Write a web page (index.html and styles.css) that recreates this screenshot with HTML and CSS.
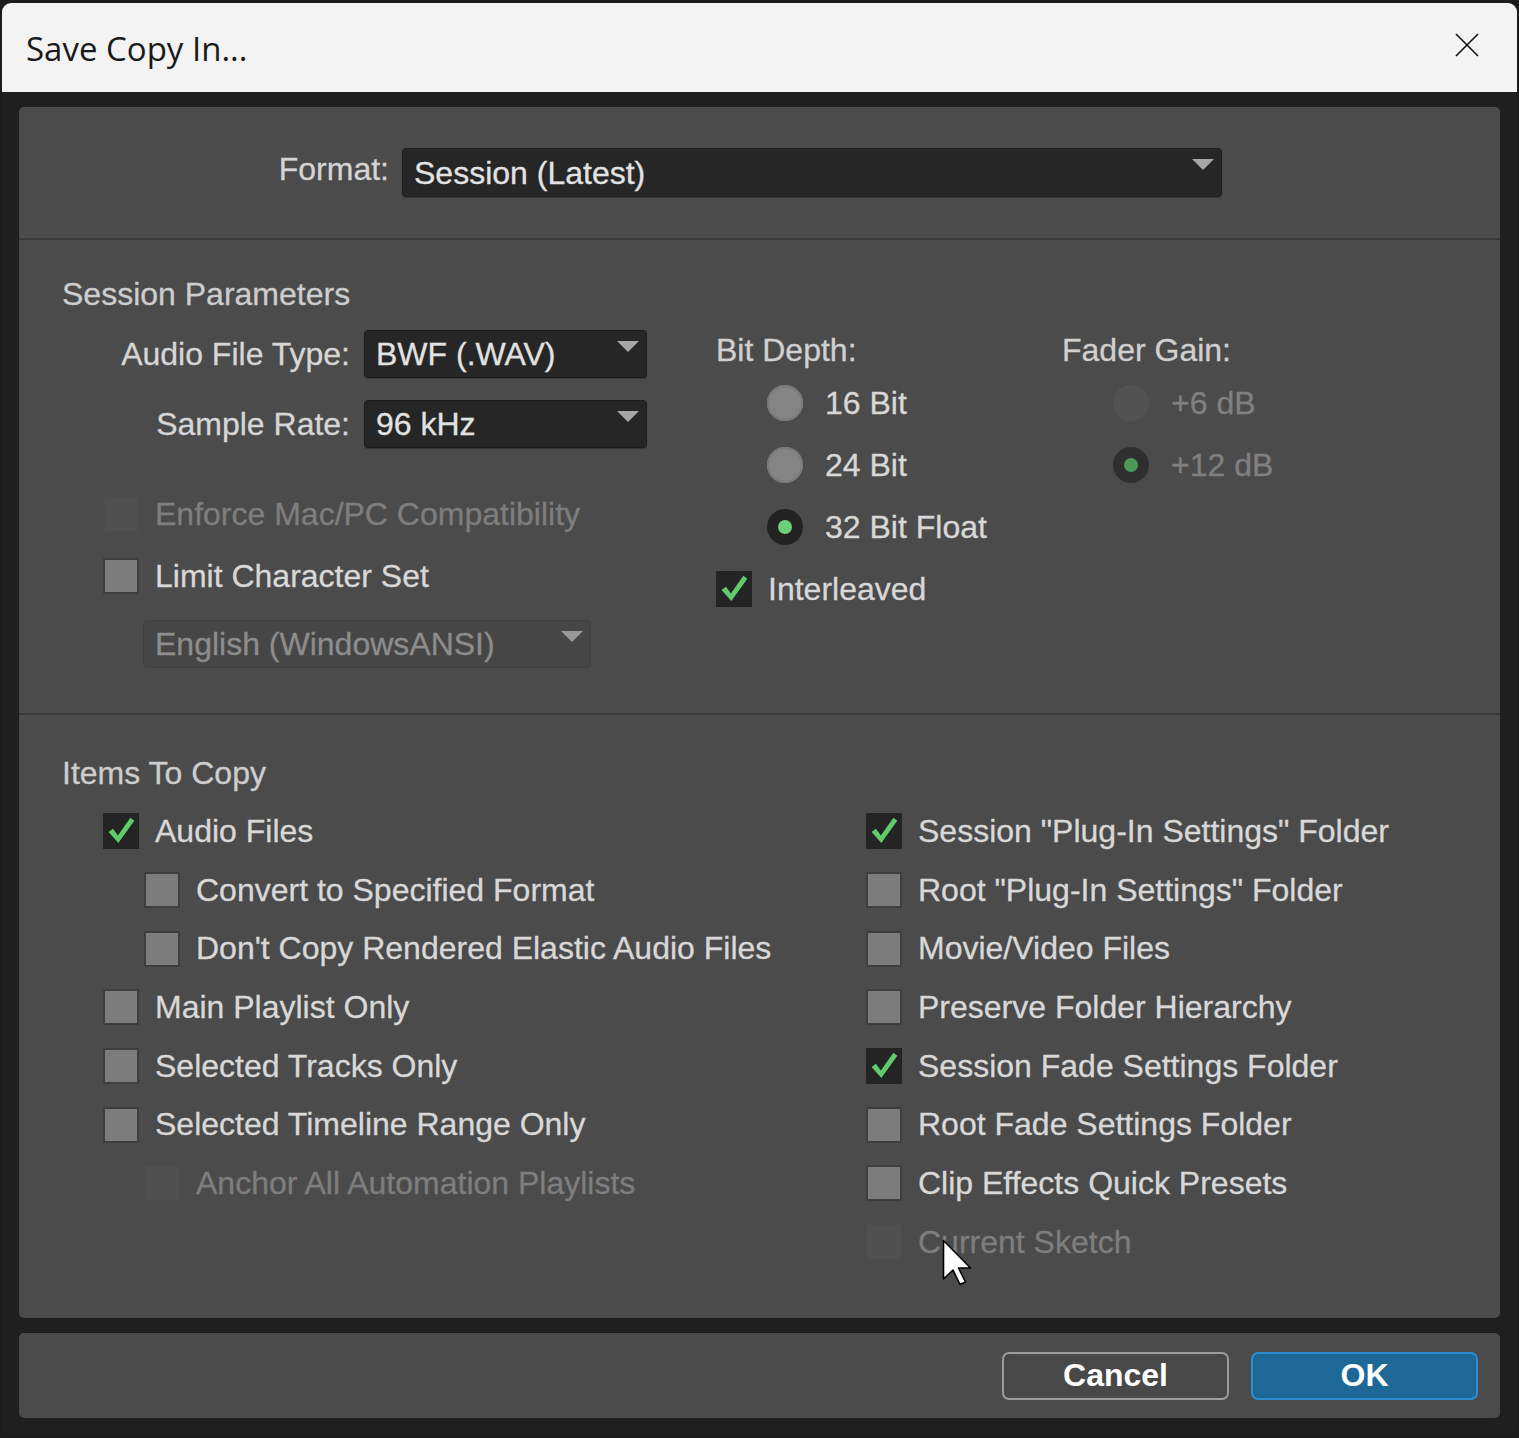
FILE: index.html
```html
<!DOCTYPE html>
<html lang="en">
<head>
<meta charset="UTF-8">
<title>Save Copy In...</title>
<link rel="stylesheet" href="styles.css">
</head>
<body>

<div class="dialog">
    <div class="titlebar">
        <span class="title">Save Copy In...</span>
        <svg class="close" width="24" height="24" viewBox="0 0 24 24">
            <path d="M1 1 L23 23 M23 1 L1 23" stroke="#111" stroke-width="1.6" fill="none"/>
        </svg>
    </div>

    <div class="frame">
        <div class="panel main">

            <div class="section format-row">
                <span class="format-label">Format:</span>
                <div class="select select-format">Session (Latest)<i class="arrow"></i></div>
            </div>

            <div class="section params">
                <div class="heading">Session Parameters</div>
                <div class="param-cols">
                    <div class="col col-a">
                        <div class="field">
                            <span class="field-label">Audio File Type:</span>
                            <div class="select select-small">BWF (.WAV)<i class="arrow"></i></div>
                        </div>
                        <div class="field field-gap">
                            <span class="field-label">Sample Rate:</span>
                            <div class="select select-small">96 kHz<i class="arrow"></i></div>
                        </div>
                        <div class="checks">
                            <div class="check check-param disabled"><span class="box"></span>Enforce Mac/PC Compatibility</div>
                            <div class="check check-param"><span class="box"></span>Limit Character Set</div>
                        </div>
                        <div class="select select-lang disabled">English (WindowsANSI)<i class="arrow"></i></div>
                    </div>

                    <div class="col col-b">
                        <div class="subhead">Bit Depth:</div>
                        <div class="radio"><span class="dot"></span>16 Bit</div>
                        <div class="radio"><span class="dot"></span>24 Bit</div>
                        <div class="radio on"><span class="dot"></span>32 Bit Float</div>
                        <div class="check check-param">
                            <span class="box checked"><svg viewBox="0 0 36 36"><path d="M4 19 L9 15.5 L14.5 23 L28.5 3 L33 6.5 L15 31.5 Z"/></svg></span>Interleaved
                        </div>
                    </div>

                    <div class="col col-c">
                        <div class="subhead">Fader Gain:</div>
                        <div class="radio disabled"><span class="dot"></span>+6 dB</div>
                        <div class="radio on disabled"><span class="dot"></span>+12 dB</div>
                    </div>
                </div>
            </div>

            <div class="section items">
                <div class="heading">Items To Copy</div>
                <div class="item-cols">
                    <div class="item-col item-left">
                        <div class="check"><span class="box checked"><svg viewBox="0 0 36 36"><path d="M4 19 L9 15.5 L14.5 23 L28.5 3 L33 6.5 L15 31.5 Z"/></svg></span>Audio Files</div>
                        <div class="check indent"><span class="box"></span>Convert to Specified Format</div>
                        <div class="check indent"><span class="box"></span>Don't Copy Rendered Elastic Audio Files</div>
                        <div class="check"><span class="box"></span>Main Playlist Only</div>
                        <div class="check"><span class="box"></span>Selected Tracks Only</div>
                        <div class="check"><span class="box"></span>Selected Timeline Range Only</div>
                        <div class="check indent disabled"><span class="box"></span>Anchor All Automation Playlists</div>
                    </div>
                    <div class="item-col">
                        <div class="check"><span class="box checked"><svg viewBox="0 0 36 36"><path d="M4 19 L9 15.5 L14.5 23 L28.5 3 L33 6.5 L15 31.5 Z"/></svg></span>Session "Plug-In Settings" Folder</div>
                        <div class="check"><span class="box"></span>Root "Plug-In Settings" Folder</div>
                        <div class="check"><span class="box"></span>Movie/Video Files</div>
                        <div class="check"><span class="box"></span>Preserve Folder Hierarchy</div>
                        <div class="check"><span class="box checked"><svg viewBox="0 0 36 36"><path d="M4 19 L9 15.5 L14.5 23 L28.5 3 L33 6.5 L15 31.5 Z"/></svg></span>Session Fade Settings Folder</div>
                        <div class="check"><span class="box"></span>Root Fade Settings Folder</div>
                        <div class="check"><span class="box"></span>Clip Effects Quick Presets</div>
                        <div class="check disabled"><span class="box"></span>Current Sketch</div>
                    </div>
                </div>
            </div>

        </div>

        <div class="panel buttons">
            <button class="btn">Cancel</button>
            <button class="btn btn-ok">OK</button>
        </div>
    </div>
</div>

<!-- mouse pointer over the dialog -->
<svg class="pointer" width="32" height="48" viewBox="0 0 32 48">
    <path d="M1.5 1.5 L1.5 40 L11 31 L18 45.5 L23.5 43 L16.5 29 L28.5 29 Z" fill="#fff" stroke="#000" stroke-width="1.6" stroke-linejoin="round"/>
</svg>

</body>
</html>
```

FILE: styles.css
```css
body {
    margin: 0;
    background: #1c1c1c;
    height: 1438px;
    overflow: hidden;
    position: relative;
    font-family: 'Liberation Sans', Arial, sans-serif;
}
.dialog {
    margin: 3px 0 0 2px;
    width: 1515px;
    height: 1433px;
    background: #1f1f1f;
    border-radius: 9px 9px 8px 8px;
    overflow: hidden;
}
.titlebar {
    height: 89px;
    background: #f3f3f3;
    display: flex;
    align-items: center;
    justify-content: space-between;
    padding: 0 38px 0 24px;
}
.title {
    font-family: 'Open Sans', sans-serif;
    font-size: 33px;
    color: #1a1a1a;
    margin-top: 2px;
}
.close {
    display: block;
    margin-bottom: 6px;
}
.frame {
    padding: 15px 17px 18px;
    display: flex;
    flex-direction: column;
    gap: 15px;
}
.panel {
    background: #4b4b4b;
    border-radius: 5px;
}
.main {
    height: 1211px;
    -webkit-text-stroke: 0.3px currentColor;
}
.section {
    border-bottom: 2px solid #393939;
}
.section:last-child {
    border-bottom: none;
}

/* format */
.format-row {
    height: 133px;
    box-sizing: border-box;
    padding-top: 41px;
    display: flex;
    align-items: flex-start;
}
.format-label {
    width: 370px;
    text-align: right;
    margin-right: 13px;
    font-size: 32px;
    line-height: 42px;
    color: #d4d4d4;
}
.select {
    position: relative;
    box-sizing: border-box;
    background: #262626;
    border: 1px solid #1c1c1c;
    border-radius: 4px;
    color: #e2e2e2;
    font-size: 32px;
    padding-left: 11px;
    box-shadow: 0 1px 1px rgba(0,0,0,0.25);
}
.select-format {
    width: 820px;
    height: 49px;
    line-height: 48px;
}
.arrow {
    position: absolute;
    top: 10px;
    right: 7px;
    width: 0;
    height: 0;
    border-left: 11px solid transparent;
    border-right: 11px solid transparent;
    border-top: 11px solid #a6a6a6;
}

/* session parameters */
.params {
    height: 475px;
    box-sizing: border-box;
    padding: 36px 0 0 43px;
}
.heading {
    font-size: 32px;
    line-height: 36px;
    color: #cdcdcd;
}
.param-cols {
    display: flex;
    margin-top: 18px;
}
.col-a {
    width: 654px;
}
.col-b {
    width: 346px;
}
.field {
    display: flex;
    align-items: center;
    height: 48px;
}
.field-gap {
    margin-top: 22px;
}
.field-label {
    width: 288px;
    margin-right: 14px;
    text-align: right;
    font-size: 32px;
    color: #d6d6d6;
}
.select-small {
    width: 283px;
    height: 48px;
    line-height: 47px;
}
.checks {
    margin-top: 35px;
}
.check-param.check {
    height: 62px;
}
.col-a .check {
    padding-left: 41px;
}
.select-lang {
    margin: 13px 0 0 81px;
    width: 448px;
    height: 48px;
    line-height: 47px;
}
.select.disabled {
    background: #464646;
    border-color: #424242;
    color: #8d8d8d;
    box-shadow: none;
}
.select.disabled .arrow {
    border-top-color: #999;
}
.subhead {
    font-size: 32px;
    line-height: 36px;
    margin-top: 2px;
    margin-bottom: 4px;
    color: #d0d0d0;
}

/* radios */
.radio {
    display: flex;
    align-items: center;
    height: 62px;
    padding-left: 51px;
    font-size: 32px;
    color: #d8d8d8;
}
.dot {
    width: 36px;
    height: 36px;
    border-radius: 50%;
    background: #848484;
    box-shadow: inset 0 0 0 2px #7a7a7a;
    margin-right: 22px;
    position: relative;
    flex-shrink: 0;
}
.radio.on .dot {
    background: #232323;
    box-shadow: none;
}
.radio.on .dot::after {
    content: "";
    position: absolute;
    left: 11px;
    top: 11px;
    width: 14px;
    height: 14px;
    border-radius: 50%;
    background: #6dd078;
}
.radio.disabled {
    color: #808080;
}
.radio.disabled .dot {
    background: #525252;
    box-shadow: none;
}
.radio.on.disabled .dot {
    background: #2f2f2f;
}
.radio.on.disabled .dot::after {
    background: #4c9a55;
}

/* checkboxes */
.check {
    display: flex;
    align-items: center;
    height: 58.7px;
    font-size: 32px;
    color: #d8d8d8;
    white-space: nowrap;
}
.box {
    width: 36px;
    height: 36px;
    box-sizing: border-box;
    border: 2px solid #3e3e3e;
    background: #7c7c7c;
    margin-right: 16px;
    flex-shrink: 0;
    -webkit-text-stroke: 0;
}
.box.checked {
    background: #242424;
    border-color: #242424;
}
.box svg {
    display: block;
    width: 32px;
    height: 32px;
}
.box svg path {
    fill: #5fcb6a;
}
.check.disabled {
    color: #7e7e7e;
}
.check.disabled .box {
    background: #505050;
    border-color: #4d4d4d;
}

/* items to copy */
.items {
    box-sizing: border-box;
    padding: 40px 0 0 43px;
}
.item-cols {
    display: flex;
    margin-top: 11px;
}
.item-left {
    width: 804px;
}
.item-left .check {
    padding-left: 41px;
}
.item-left .check.indent {
    padding-left: 82px;
}

/* buttons */
.buttons {
    height: 85px;
    display: flex;
    justify-content: flex-end;
    align-items: center;
    gap: 22px;
    padding-right: 22px;
}
.btn {
    width: 227px;
    height: 48px;
    border: 2px solid #9b9b9b;
    border-radius: 7px;
    background: #484848;
    color: #fff;
    font-family: 'Liberation Sans', Arial, sans-serif;
    font-weight: bold;
    font-size: 32px;
    padding: 0;
}
.btn-ok {
    background: #1e6898;
    border-color: #2c8ed0;
}

.pointer {
    position: absolute;
    left: 942px;
    top: 1239px;
}
```
